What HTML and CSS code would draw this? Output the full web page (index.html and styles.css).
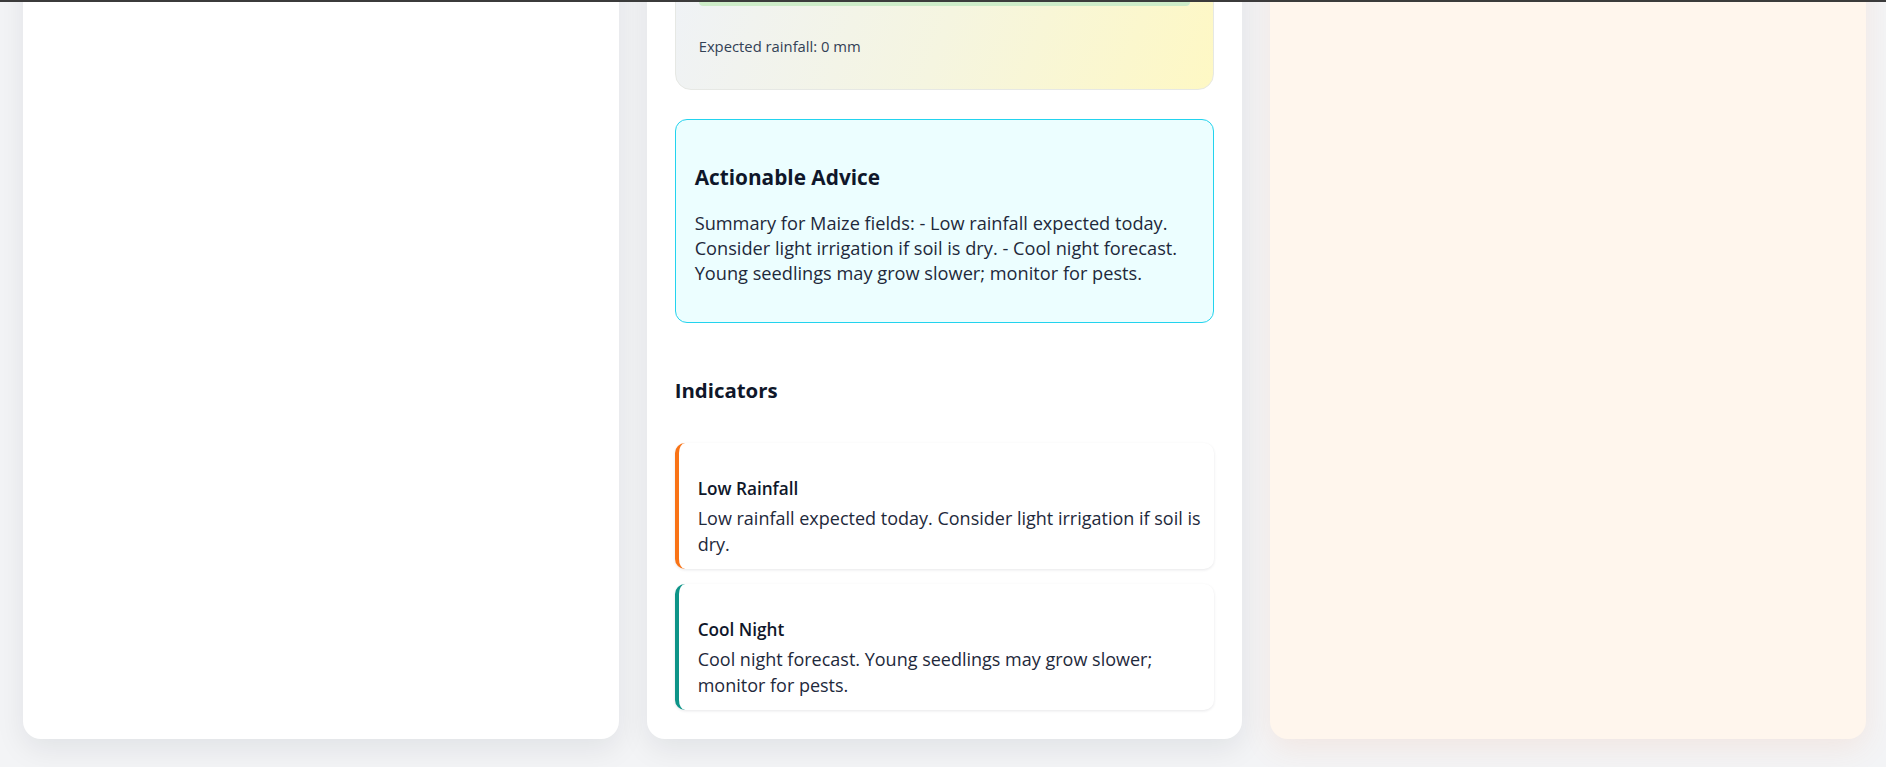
FILE: index.html
```html
<!DOCTYPE html>
<html lang="en">
<head>
<meta charset="utf-8">
<title>Crop Dashboard</title>
<link rel="stylesheet" href="styles.css">
</head>
<body>
<div class="topline"></div>
<main class="board">
  <section class="panel panel-plain"></section>
  <section class="panel panel-main">
    <div class="weather">
      <div class="bar"><div class="bar-fill" style="width:100%"></div></div>
      <p class="rain">Expected rainfall: 0 mm</p>
    </div>
    <div class="advice">
      <h3 class="advice-title">Actionable Advice</h3>
      <p class="advice-text">Summary for Maize fields: - Low rainfall expected today. Consider light irrigation if soil is dry. - Cool night forecast. Young seedlings may grow slower; monitor for pests.</p>
    </div>
    <h3 class="ind-head">Indicators</h3>
    <div class="ind-list">
      <div class="ind ind-orange">
        <h4 class="ind-title">Low Rainfall</h4>
        <p class="ind-text">Low rainfall expected today. Consider light irrigation if soil is dry.</p>
      </div>
      <div class="ind ind-teal">
        <h4 class="ind-title">Cool Night</h4>
        <p class="ind-text">Cool night forecast. Young seedlings may grow slower; monitor for pests.</p>
      </div>
    </div>
  </section>
  <section class="panel panel-warm"></section>
</main>
</body>
</html>
```
FILE: styles.css
```css
* { box-sizing: border-box; }
html, body { margin: 0; padding: 0; }
body {
  background: #f3f4f6;
  font-family: "Open Sans", "Noto Sans", sans-serif;
  color: #1e293b;
  overflow: hidden;
  height: 767px;
}
.topline {
  position: fixed;
  top: 0; left: 0; right: 0;
  height: 2px;
  background: #3b3b3b;
  z-index: 10;
}
.board {
  display: grid;
  grid-template-columns: 1fr 1fr 1fr;
  gap: 28px;
  padding: 0 20px 0 23px;
  margin-top: -53px;
  align-items: stretch;
}
.panel {
  border-radius: 18px;
  background: #ffffff;
  box-shadow: 0 10px 30px rgba(15, 23, 42, 0.08);
}
.panel-warm {
  background: #fff6ed;
  box-shadow: 0 10px 30px rgba(234, 120, 60, 0.10);
}
.panel-main {
  padding: 28px 28px 29px;
  display: flex;
  flex-direction: column;
}
.weather {
  border: 1px solid #e6e8e4;
  border-radius: 16px;
  padding: 22px 23px 32px;
  background: linear-gradient(110deg, #eff2f6 0%, #f5f5e0 50%, #fef8c4 100%);
}
.bar {
  height: 8px;
  border-radius: 4px;
  background: #e2e8f0;
  overflow: hidden;
}
.bar-fill {
  height: 100%;
  border-radius: 4px;
  background: #cdecc8;
}
.rain {
  margin: 30px 0 0;
  font-size: 14.8px;
  line-height: 21px;
  color: #334155;
}
.advice {
  margin-top: 29px;
  border: 1px solid #22d3ee;
  border-radius: 12px;
  background: #ecfeff;
  padding: 19px 19px 37px;
}
.advice-title {
  margin: 24px 0 20px;
  font-size: 20.8px;
  line-height: 28px;
  font-weight: 700;
  color: #0f172a;
}
.advice-text {
  margin: 0;
  font-size: 18.2px;
  line-height: 24.75px;
  color: #1e293b;
}
.ind-head {
  margin: 53px 0 39px;
  font-size: 20.4px;
  line-height: 28px;
  font-weight: 700;
  color: #0f172a;
}
.ind-list {
  display: flex;
  flex-direction: column;
  gap: 15px;
}
.ind {
  background: #ffffff;
  border-radius: 10px;
  border-left: 4px solid #f97316;
  padding: 34px 6px 12px 19px;
  box-shadow: 0 1px 3px rgba(15, 23, 42, 0.10);
}
.ind-orange { border-left-color: #f97316; }
.ind-teal { border-left-color: #0d9488; }
.ind-title {
  margin: 0 0 4px;
  font-size: 17.2px;
  line-height: 24px;
  font-weight: 600;
  color: #0f172a;
}
.ind-text {
  margin: 0;
  font-size: 18px;
  line-height: 26px;
  color: #1e293b;
}
```
